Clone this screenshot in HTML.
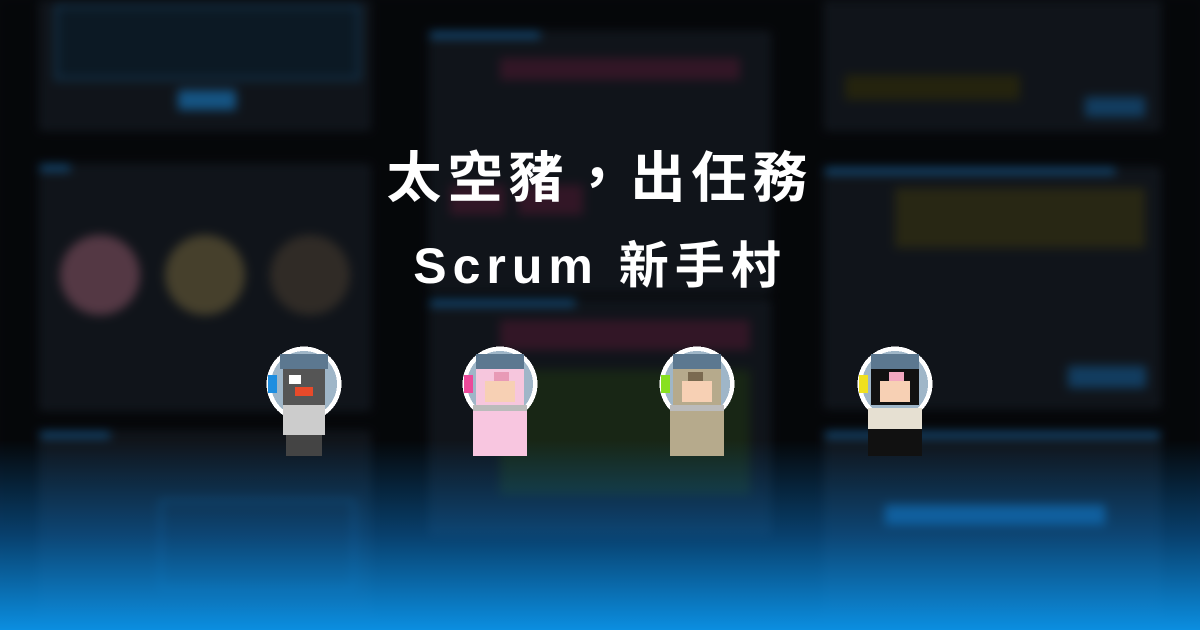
<!DOCTYPE html>
<html><head><meta charset="utf-8"><style>
*{margin:0;padding:0;box-sizing:border-box}
html,body{width:1200px;height:630px;overflow:hidden}
body{background:#07090c;position:relative;font-family:"Liberation Sans","Noto Sans CJK TC",sans-serif}
.bg{position:absolute;left:0;top:0;width:1200px;height:630px;filter:blur(5px);overflow:hidden}
.p{position:absolute;background:#151a21;border:2px solid #202b36}
.bar{position:absolute;height:6px;background:#1d6aa6}
.dim{position:absolute;inset:0;background:rgba(0,0,0,0.2)}
.grad{position:absolute;left:0;right:0;bottom:0;height:190px;background:linear-gradient(to bottom,rgba(8,80,140,0) 0%,rgba(10,110,190,0.55) 50%,#0b8ee0 100%)}
h1{position:absolute;left:0;right:0;text-align:center;color:#fff;font-weight:bold;letter-spacing:6px}
.c{position:absolute;top:345px}
</style></head><body>
<div class="bg">
 <div class="p" style="left:40px;top:-10px;width:330px;height:140px"></div>
 <div class="p" style="left:55px;top:5px;width:305px;height:75px;border-color:#1d5c8a;background:#10202e"></div>
 <div class="p" style="left:178px;top:90px;width:58px;height:20px;background:#1b6aa4;border:none"></div>
 <div class="p" style="left:40px;top:165px;width:330px;height:245px"></div>
 <div class="bar" style="left:40px;top:165px;width:30px"></div>
 <div class="p" style="left:60px;top:235px;width:80px;height:80px;border-radius:50%;background:#6a4656;border:none"></div>
 <div class="p" style="left:165px;top:235px;width:80px;height:80px;border-radius:50%;background:#585038;border:none"></div>
 <div class="p" style="left:270px;top:235px;width:80px;height:80px;border-radius:50%;background:#3c3630;border:none"></div>
 <div class="p" style="left:40px;top:432px;width:330px;height:220px"></div>
 <div class="bar" style="left:40px;top:432px;width:70px"></div>
 <div class="p" style="left:160px;top:500px;width:195px;height:90px;border-color:#1d5c8a"></div>
 <div class="p" style="left:430px;top:32px;width:340px;height:260px"></div>
 <div class="bar" style="left:430px;top:32px;width:110px"></div>
 <div class="p" style="left:500px;top:58px;width:240px;height:22px;background:#3f1c30;border:none"></div>
 <div class="p" style="left:450px;top:185px;width:55px;height:30px;background:#3f1c30;border:none"></div>
 <div class="p" style="left:518px;top:185px;width:65px;height:30px;background:#3f1c30;border:none"></div>
 <div class="p" style="left:430px;top:300px;width:340px;height:235px"></div>
 <div class="bar" style="left:430px;top:300px;width:145px"></div>
 <div class="p" style="left:500px;top:320px;width:250px;height:30px;background:#3f1c30;border:none"></div>
 <div class="p" style="left:500px;top:370px;width:250px;height:125px;background:#1e301b;border:none"></div>
 <div class="p" style="left:825px;top:-10px;width:335px;height:140px"></div>
 <div class="p" style="left:845px;top:75px;width:175px;height:25px;background:#2e2c12;border:none"></div>
 <div class="p" style="left:1085px;top:97px;width:60px;height:20px;background:#174d78;border:none"></div>
 <div class="p" style="left:825px;top:168px;width:335px;height:240px"></div>
 <div class="bar" style="left:825px;top:168px;width:290px"></div>
 <div class="p" style="left:895px;top:188px;width:250px;height:60px;background:#33311a;border:none"></div>
 <div class="p" style="left:1068px;top:366px;width:78px;height:22px;background:#174d78;border:none"></div>
 <div class="p" style="left:825px;top:432px;width:335px;height:220px"></div>
 <div class="bar" style="left:825px;top:432px;width:335px"></div>
 <div class="p" style="left:885px;top:505px;width:220px;height:20px;background:#1a6aa8;border:none"></div>
 <div class="dim"></div>
</div>
<div class="grad"></div>
<h1 style="top:133px;font-size:55px">太空豬，出任務</h1>
<h1 style="top:226px;font-size:50px">Scrum 新手村</h1>

<svg width="0" height="0" style="position:absolute"><defs>
<g id="helm"><ellipse cx="14" cy="13" rx="12.5" ry="12.5" fill="#fff"/><ellipse cx="14" cy="13" rx="11" ry="11" fill="#9fb6c8"/><rect x="6" y="3" width="16" height="5" fill="#5c7890"/></g>
</defs></svg>

<svg class="c" style="left:262px" width="84" height="114" viewBox="0 0 28 38" shape-rendering="crispEdges">
<use href="#helm"/><rect x="7" y="8" width="14" height="12" fill="#555"/><rect x="9" y="10" width="4" height="3" fill="#fff"/><rect x="11" y="14" width="6" height="3" fill="#e84a2a"/>
<rect x="2" y="10" width="3" height="6" fill="#1e8ee0"/><rect x="7" y="20" width="14" height="10" fill="#ccc"/><rect x="8" y="30" width="12" height="7" fill="#444"/>
</svg>
<svg class="c" style="left:458px" width="84" height="114" viewBox="0 0 28 38" shape-rendering="crispEdges">
<use href="#helm"/><rect x="6" y="8" width="16" height="12" fill="#f6c6dd"/><rect x="9" y="12" width="10" height="7" fill="#f7d0b4"/><rect x="12" y="9" width="5" height="3" fill="#e89ab6"/>
<rect x="2" y="10" width="3" height="6" fill="#ec4a9a"/><rect x="5" y="21" width="18" height="16" fill="#f8c6e0"/><rect x="5" y="20" width="18" height="2" fill="#bbb"/>
</svg>
<svg class="c" style="left:655px" width="84" height="114" viewBox="0 0 28 38" shape-rendering="crispEdges">
<use href="#helm"/><rect x="6" y="8" width="16" height="12" fill="#b6aa8c"/><rect x="9" y="12" width="10" height="7" fill="#f7d0b4"/><rect x="11" y="9" width="5" height="3" fill="#7a6a50"/>
<rect x="2" y="10" width="3" height="6" fill="#88e020"/><rect x="5" y="21" width="18" height="16" fill="#b6aa8c"/><rect x="5" y="20" width="18" height="2" fill="#bbb"/>
</svg>
<svg class="c" style="left:853px" width="84" height="114" viewBox="0 0 28 38" shape-rendering="crispEdges">
<use href="#helm"/><rect x="6" y="8" width="16" height="12" fill="#111"/><rect x="9" y="12" width="10" height="7" fill="#f7d0b4"/><rect x="12" y="9" width="5" height="3" fill="#f2a8c0"/>
<rect x="2" y="10" width="3" height="6" fill="#f0e020"/><rect x="5" y="21" width="18" height="7" fill="#e6e0d2"/><rect x="5" y="28" width="18" height="9" fill="#111"/>
</svg>
</body></html>
